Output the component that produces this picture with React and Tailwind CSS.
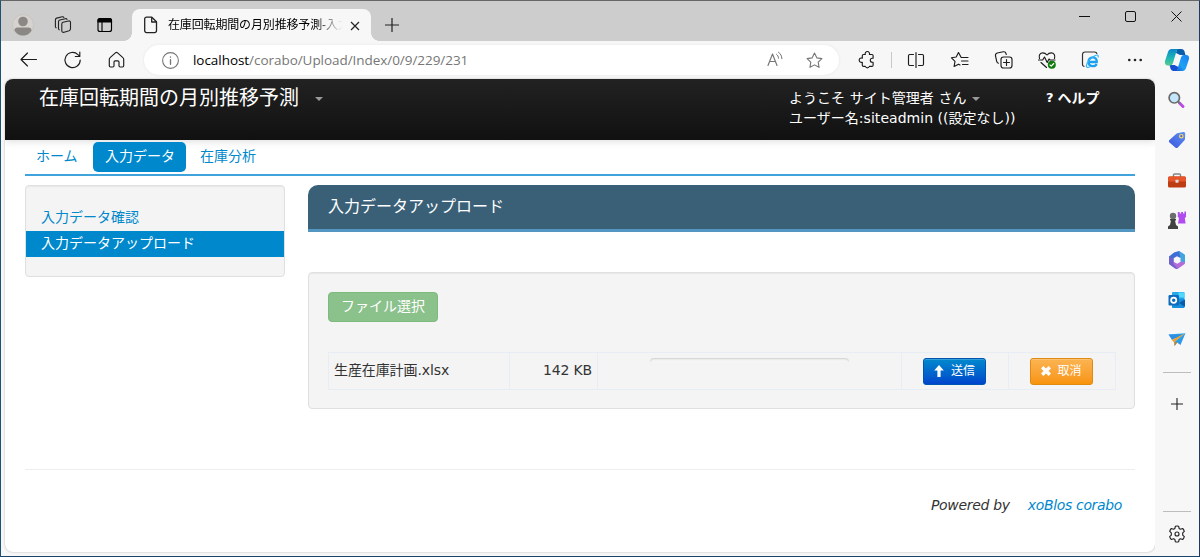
import React from 'react';

const Icon = ({ size = 20, children, className = '' }) => (
  <svg
    width={size}
    height={size}
    viewBox="0 0 20 20"
    fill="none"
    stroke="currentColor"
    strokeWidth="1.15"
    strokeLinecap="round"
    strokeLinejoin="round"
    className={`shrink-0 ${className}`}
  >
    {children}
  </svg>
);

const STAR = 'M10 2.2l2.4 5 5.4.8-3.9 3.8.9 5.4-4.8-2.6-4.8 2.6.9-5.4L2.200 8l5.400-.8z';

const Caret = ({ className = '' }) => (
  <span className={`inline-block h-0 w-0 border-x-4 border-t-4 border-x-transparent border-t-[#999] ${className}`} />
);

/* Title bar with the single open tab */
const TitleBar = () => (
  <div className="flex h-10 shrink-0 bg-[#cdcdcd] text-black">
    <div className="flex w-[131px] items-center pt-2 pl-[11px]">
      <svg width="22" height="22" viewBox="0 0 22 22">
        <circle cx="11" cy="11" r="10.500" fill="#d6d3ce" stroke="#c3c0bb" strokeWidth=".6" />
        <circle cx="11" cy="7.500" r="4.800" fill="#8b8784" />
        <path d="M2.500 16.500c0-2 1.200-3 3-3h11c1.800 0 3 1 3 3-1.500 3-4.800 5-8.500 5s-7-2-8.500-5z" fill="#8b8784" />
      </svg>
      <svg width="18" height="18" viewBox="0 0 18 18" fill="none" stroke="#222" strokeWidth="1.100" strokeLinecap="round" strokeLinejoin="round" className="ml-5">
        <path d="M9 6.300l5.500-1.300c1.200-.3 2 .3 2 1.500v6.300c0 1-.5 1.600-1.400 1.900l-5 1.500c-1.400.4-2.300-.2-2.300-1.500V8c0-.9.400-1.500 1.200-1.700z" />
        <path d="M5.200 13.800c-.5-.3-.7-.7-.7-1.300V5.800c0-1 .4-1.600 1.300-1.800l5.500-1.300c.8-.2 1.400 0 1.700.7" />
        <path d="M2.100 11.800c-.5-.3-.7-.7-.7-1.300V3.900c0-1 .4-1.600 1.300-1.800L8.200.8c.8-.2 1.400 0 1.700.7" />
      </svg>
      <Icon size={20} className="ml-[23px]">
        <rect x="3" y="3.500" width="13.500" height="13" rx="2" />
        <path d="M3 5.500a2 2 0 0 1 2-2h9.500a2 2 0 0 1 2 2V7H3z" fill="currentColor" />
        <path d="M7 7v9.500" />
      </Icon>
    </div>
    <div className="relative mt-2 flex w-[239px] items-center rounded-t-lg bg-[#f7f7f7] pl-[11px]">
      <svg width="16" height="18" viewBox="0 0 16 18" fill="none" stroke="#222" strokeWidth="1.300" strokeLinejoin="round">
        <path d="M3.500 1.200h5.300l4.700 4.600v9a1.800 1.800 0 0 1-1.800 1.800H3.500a1.800 1.800 0 0 1-1.800-1.800V3a1.800 1.800 0 0 1 1.800-1.800z" />
        <path d="M8.700 1.500V6h4.600" />
      </svg>
      <span className="ml-[9px] w-[174px] overflow-hidden bg-gradient-to-r from-black from-85% to-transparent bg-clip-text text-xs leading-5 tracking-[-0.15px] whitespace-nowrap text-transparent">
        在庫回転期間の月別推移予測-入力
      </span>
      <svg width="10" height="10" viewBox="0 0 10 10" stroke="#222" strokeWidth="1.200" className="mt-0.5 ml-2">
        <path d="M1 1l8 8M9 1l-8 8" />
      </svg>
      <span className="absolute bottom-0 -left-2 h-2 w-2 bg-[radial-gradient(circle_at_0_0,#cdcdcd_7.5px,#f7f7f7_8px)]" />
      <span className="absolute -right-2 bottom-0 h-2 w-2 bg-[radial-gradient(circle_at_100%_0,#cdcdcd_7.5px,#f7f7f7_8px)]" />
    </div>
    <svg width="14" height="14" viewBox="0 0 14 14" stroke="#222" strokeWidth="1.200" className="mt-[17px] ml-[14px]">
      <path d="M7 0v14M0 7h14" />
    </svg>
    <div className="ml-auto flex h-[30px] items-center gap-[35px] pr-[17px]">
      <svg width="11" height="11" viewBox="0 0 11 11" stroke="#111"><path d="M0 5.500h11" /></svg>
      <svg width="11" height="11" viewBox="0 0 11 11" fill="none" stroke="#111"><rect x=".5" y=".5" width="10" height="10" rx="1.500" /></svg>
      <svg width="11" height="11" viewBox="0 0 11 11" stroke="#111"><path d="M.5.5l10 10M10.500.5l-10 10" /></svg>
    </div>
  </div>
);

const AddressBar = () => (
  <div className="flex h-[30px] w-[695px] items-center rounded-full bg-white pl-[17px] text-[#767676] shadow-[0_0_3px_#e4e4e4]">
    <Icon size={19}>
      <circle cx="10" cy="10" r="8.300" />
      <path d="M10 9v5M10 6.300v.2" strokeWidth="1.400" />
    </Icon>
    <span className="ml-[13px] font-['Open_Sans',sans-serif] text-[13.5px] leading-5 tracking-[-0.05px] whitespace-nowrap">
      <span className="text-black">localhost</span>/corabo/Upload/Index/0/9/229/231
    </span>
    <div className="ml-auto flex items-center pr-[15px]">
      <Icon size={20}>
        <path d="M3 15.500L7.500 4l4.500 11.500M4.600 11.500h5.800" />
        <path d="M11.500 4.200c1.200 1 1.900 2.300 2 4M13.500 2.200c2.200 1.600 3.300 3.700 3.400 6.500" strokeWidth="1" />
      </Icon>
      <Icon size={19} className="ml-5"><path d={STAR} /></Icon>
    </div>
  </div>
);

const Copilot = () => (
  <svg width="26" height="24" viewBox="0 0 26 24">
    <defs>
      <linearGradient id="cpA" x1="0" y1="0" x2="0" y2="1">
        <stop offset="0" stopColor="#0b86c8" />
        <stop offset=".55" stopColor="#1cb6b5" />
        <stop offset="1" stopColor="#58cc8c" />
      </linearGradient>
      <linearGradient id="cpB" x1="1" y1="0" x2="0" y2="1">
        <stop offset="0" stopColor="#1c7df0" />
        <stop offset=".6" stopColor="#1aa3f5" />
        <stop offset="1" stopColor="#164fd1" />
      </linearGradient>
    </defs>
    <path d="M13 1h4.500c1.500 0 2.500 1 3 2.500L21.500 7H16l-4-2z" fill="#0a5ea8" />
    <path d="M13 23H9.500c-1.500 0-2.500-1-3-2.500l-1-3.500h5l4 2z" fill="#164fd1" />
    <path d="M7.500 1H15c-1.500.5-2.300 1.500-2.800 3L9 15c-.6 1.700-1.500 2.500-3 2.500H4C1.500 17.500.5 15.500 1 13L4 4c.6-2 1.800-3 3.500-3z" fill="url(#cpA)" />
    <path d="M18.500 23H11c1.500-.5 2.300-1.500 2.800-3L17 9.500c.6-1.700 1.500-2.500 3-2.500h2c2.500 0 3.500 2 3 4l-3 9c-.6 2-1.800 3-3.500 3z" fill="url(#cpB)" />
  </svg>
);

const ToolBar = () => (
  <div className="flex h-[38px] shrink-0 items-center bg-[#f7f7f7] text-[#1c1c1c]">
    <div className="flex w-[143px] items-center pl-[18px]">
      <Icon size={20}><path d="M17.500 9.500H2M8.500 3L2 9.500 8.500 16" /></Icon>
      <Icon size={20} className="ml-6">
        <path d="M17.200 10a7.600 7.600 0 1 1-2.300-5.400L16.600 6.200M16.800 2v4.500h-4.500" />
      </Icon>
      <Icon size={20} className="ml-6">
        <path d="M2.300 9.200c0-.7.3-1.200.8-1.600l5.300-4.700c.7-.6 1.500-.6 2.200 0l5.300 4.700c.5.4.8.900.8 1.600v6.600c0 .7-.5 1.200-1.200 1.200h-2.300c-.7 0-1.200-.5-1.200-1.200V12a1.200 1.200 0 0 0-1.200-1.200H8.200A1.200 1.200 0 0 0 7 12v3.800c0 .7-.5 1.200-1.200 1.200H3.500c-.7 0-1.200-.5-1.200-1.200z" />
      </Icon>
    </div>
    <AddressBar />
    <div className="flex items-center pl-[18px]">
      <Icon size={20}>
        <path d="M6.500 4.500h1.800a2.200 2.200 0 1 1 4.100 0h2.500c.7 0 1.200.5 1.200 1.200v2.500h-.8a2 2 0 0 0 0 4h.8v3c0 .7-.5 1.200-1.200 1.200h-2.500a2.200 2.200 0 0 1-4.100 0H6.500c-.7 0-1.200-.5-1.200-1.200v-3a2.200 2.200 0 1 1 0-4V5.700c0-.7.5-1.200 1.200-1.200z" />
      </Icon>
      <span className="ml-[14px] h-4 w-px bg-[#c8c8c8]" />
      <Icon size={20} className="ml-[14px]">
        <path d="M10 2.500v15M7.500 4.500H3.700c-.7 0-1.200.5-1.200 1.200v8.600c0 .7.5 1.200 1.200 1.200h3.800M12.500 4.500h3.800c.7 0 1.200.5 1.200 1.200v8.600c0 .7-.5 1.200-1.200 1.200h-3.800" />
      </Icon>
      <Icon size={20} className="ml-6">
        <path d="M12 7.500h-.8L8.500 2.500 6.200 7l-4.700.8L5 11.400l-.9 5.100 4.400-2.300 1.500.8M12.500 7.500h5.500M11.500 11h6.500M12.500 14.500h5.500" />
      </Icon>
      <Icon size={20} className="ml-6">
        <rect x="7" y="7" width="11" height="11" rx="2.500" />
        <path d="M12.500 9.500v6M9.500 12.500h6M4.500 13.200c-1-.2-1.600-.9-1.800-1.800L1.500 5.800c-.2-1.400.5-2.500 1.800-2.800l6-1.200c1.300-.2 2.400.5 2.700 1.700l.3 1" />
      </Icon>
      <Icon size={20} className="ml-[23px]">
        <path d="M2.500 8.500C1.500 5.500 3 2.800 5.800 2.800c1.700 0 3 .8 4.200 2.200 1.200-1.400 2.500-2.200 4.200-2.200 2.800 0 4.300 2.700 3.300 5.700M1.500 10h4.200l1.800-3 2.700 5.500L12 9l1 1h5M4 12.500l5.500 5" />
        <circle cx="14.800" cy="14.800" r="4" fill="#107c10" stroke="none" />
        <path d="M13 15l1.300 1.200 2.400-2.700" stroke="#fff" />
      </Icon>
      <svg width="20" height="20" viewBox="0 0 20 20" fill="none" className="ml-6">
        <path d="M3.500 16.500a2 2 0 0 1-2-2V4.500A2.500 2.500 0 0 1 4 2h9.500A2.500 2.500 0 0 1 16 4" stroke="#333" strokeWidth="1.200" />
        <path d="M7.500 12h8.300c.3-2.700-1.400-4.700-4-4.700s-4.300 1.900-4.300 4.500 1.800 4.400 4.400 4.400c1.800 0 3.100-.8 3.700-2.200" stroke="#1ba1f0" strokeWidth="2.300" />
        <path d="M17 7.500c.8-2.100-.3-3.200-2.700-2C11 7 5.500 12.500 5.300 15.700c0 2 1.800 2 3.700 1" stroke="#35b5f5" strokeWidth="1.200" />
      </svg>
      <svg width="16" height="4" viewBox="0 0 16 4" fill="#222" className="ml-[26px]">
        <circle cx="2.300" cy="2" r="1.300" /><circle cx="8" cy="2" r="1.300" /><circle cx="13.700" cy="2" r="1.300" />
      </svg>
      <span className="ml-[21px]"><Copilot /></span>
    </div>
  </div>
);

/* Edge side rail */
const SideRail = () => (
  <div className="flex w-11 shrink-0 flex-col items-center bg-[#f7f7f7] text-[#222]">
    <div className="flex flex-col gap-5 pt-[11px]">
      <svg width="20" height="20" viewBox="0 0 20 20">
        <path d="M12.500 13l3.500 3.500" stroke="#b94be8" strokeWidth="3" strokeLinecap="round" />
        <path d="M11 11.500l2 2" stroke="#777" strokeWidth="2" />
        <circle cx="7.300" cy="7.800" r="5.200" fill="#c3e6fb" stroke="#6a6a6a" strokeWidth="1.700" />
      </svg>
      <svg width="20" height="20" viewBox="0 0 20 20">
        <defs><linearGradient id="tag" x1="1" y1="0" x2="0" y2="1"><stop stopColor="#5d93f5" /><stop offset="1" stopColor="#3b55dd" /></linearGradient></defs>
        <path d="M10.500 3.300l5.500-1.300c1.500-.3 2.300.4 2.200 1.800L18 9c0 .6-.3 1.100-.7 1.500l-6.500 7c-.8.8-1.700.8-2.500 0l-5.800-5c-.8-.8-.8-1.700 0-2.500l6.600-6c.4-.4.8-.6 1.400-.7z" fill="url(#tag)" />
        <circle cx="14.300" cy="6.200" r="1.700" fill="#4a63c8" stroke="#ffd85a" strokeWidth="1.200" />
      </svg>
      <svg width="20" height="20" viewBox="0 0 20 20">
        <path d="M6.500 7V5c0-.6.400-1 1-1h5c.6 0 1 .4 1 1v2" fill="none" stroke="#858585" strokeWidth="1.400" />
        <rect x="1" y="6.500" width="18" height="11" rx="1.500" fill="#bd3c12" />
        <path d="M1 8C1 7.200 1.700 6.500 2.500 6.500h15c.8 0 1.500.7 1.500 1.500v3.500H1z" fill="#e5572a" />
        <rect x="8.500" y="9.800" width="3" height="3" rx=".5" fill="#ddd" />
      </svg>
      <svg width="20" height="20" viewBox="0 0 20 20">
        <path d="M10.800 2h1.900v1.600h1.400V2h1.900v1.600h1.400V1.500H19V7l-1.200 1 .8 5.500H11l1-5.500-1.200-1z" fill="#b14df0" />
        <circle cx="6" cy="6" r="3.200" fill="#6d6d6d" />
        <path d="M3 9h6v1.500H8l1 4.500 2 1.500V19H1v-2.500L3 15l1-4.500H3z" fill="#414141" />
      </svg>
      <svg width="20" height="20" viewBox="0 0 20 20">
        <path d="M7 2.500L12 1l6 4.500-5 2.300-3-1.500-3.500 2V12L2 14V6.500z" fill="#3e6fd6" />
        <path d="M12 1l5 3c.8.500 1 1 1 2v7.500l-4.500-2V8z" fill="#43a5df" />
        <path d="M18 12.500c0 1-.3 1.500-1 2L10.500 19l-8-4.500 4-2.800 3.800 2 3.700-2.200z" fill="#b46cd8" />
        <path d="M2 6.500v7.500l6 4.500c1 .5 1.500.5 2.500 0l-4-4.500V8.300z" fill="#7161ca" />
      </svg>
      <svg width="20" height="20" viewBox="0 0 20 20">
        <rect x="5" y="2" width="12.500" height="8" rx="1" fill="#28a8ea" />
        <rect x="11.500" y="2.500" width="6" height="5" fill="#50d9ff" />
        <path d="M5 8l12.500 1v8c0 .6-.4 1-1 1H6c-.6 0-1-.4-1-1z" fill="#1490df" />
        <path d="M18 9.500V17l-6-4z" fill="#0a5ca8" />
        <rect x="1.500" y="5" width="10.500" height="10.500" rx="1.200" fill="#0f6cbd" />
        <circle cx="6.700" cy="10.200" r="2.600" fill="none" stroke="#fff" strokeWidth="1.700" />
      </svg>
      <svg width="20" height="20" viewBox="0 0 20 20">
        <path d="M1.500 4.500L18.500 3l-8 6z" fill="#53c3f2" />
        <path d="M1.500 4.500L5 10l12-6z" fill="#2c8ee5" />
        <path d="M5 10l13.500-7L7 12.500z" fill="#f5a11d" />
        <path d="M7.500 16v-4l11-9-5 12-3.500-2.500z" fill="#2d9be9" />
        <path d="M7.500 12v4l2.800-3.500z" fill="#d97a10" />
      </svg>
    </div>
    <div className="mt-[22px] h-px w-7 bg-[#bdbdbd]" />
    <svg width="12" height="12" viewBox="0 0 12 12" stroke="#222" strokeWidth="1.100" className="mt-[25px]">
      <path d="M6 0v12M0 6h12" />
    </svg>
    <div className="mt-[101px] h-px w-7 bg-[#bdbdbd]" />
    <Icon size={20} className="mt-3">
      <path d="M8.400 2.200c1-.3 2.200-.3 3.200 0l.5 2.200 1.300.8 2.300-.7c.8.800 1.300 1.700 1.600 2.800l-1.600 1.600v2.200l1.600 1.600c-.3 1.100-.8 2-1.600 2.800l-2.300-.7-1.300.8-.5 2.200c-1 .3-2.200.3-3.200 0l-.5-2.200-1.300-.8-2.300.7c-.8-.8-1.300-1.700-1.600-2.800l1.600-1.600V8.900L2.700 7.300c.3-1.100.8-2 1.600-2.800l2.300.7 1.300-.8z" />
      <circle cx="10" cy="10" r="2" />
    </Icon>
  </div>
);

const SiteHeader = () => (
  <header className="flex h-[61px] shrink-0 bg-gradient-to-b from-[#222] to-[#111] text-white shadow-[0_1px_8px_rgba(0,0,0,0.15)]">
    <div className="flex h-[38px] w-[784px] items-center pl-[34px] text-xl">
      在庫回転期間の月別推移予測
      <Caret className="mt-0.5 ml-4" />
    </div>
    <div className="w-[256px] pt-[9px] text-sm leading-5 whitespace-nowrap">
      <div className="flex items-center">
        <span className="tracking-[0.04px]">ようこそ サイト管理者 さん</span>
        <Caret className="mt-0.5 ml-[6px]" />
      </div>
      <div className="tracking-[0.03px]">ユーザー名:siteadmin ((設定なし))</div>
    </div>
    <div className="flex h-9 items-center gap-1 pt-0.5 pl-px text-sm font-bold">
      <span className="text-[13px]">?</span>
      <span>ヘルプ</span>
    </div>
  </header>
);

const UploadTable = () => (
  <table className="mt-[30px] w-[787px] table-fixed border-collapse text-sm text-[#333]">
    <colgroup>
      <col className="w-[181px]" />
      <col className="w-[88px]" />
      <col className="w-[304px]" />
      <col className="w-[107px]" />
      <col className="w-[107px]" />
    </colgroup>
    <tbody>
      <tr className="h-[37px] [&>td]:border [&>td]:border-[#e6edf5] [&>td]:p-0">
        <td><div className="-mt-0.5 pl-[5px] tracking-[-0.1px]">生産在庫計画.xlsx</div></td>
        <td><div className="-mt-0.5 pr-[5px] text-right tracking-[-0.15px]">142 KB</div></td>
        <td className="align-top">
          <div className="mx-auto mt-[5px] h-[7px] w-[199px] rounded-t bg-[#f5f5f5] shadow-[inset_0_1px_2px_rgba(0,0,0,0.16)] [clip-path:inset(0_0_3px_0)]" />
        </td>
        <td>
          <button className="ml-[21px] flex h-[27px] w-[63px] items-center justify-center gap-[7px] rounded-[3px] border border-[#0055b3] bg-gradient-to-b from-[#0088cc] to-[#0044cc] text-xs text-white shadow-[inset_0_1px_0_rgba(255,255,255,0.2)]">
            <svg width="10" height="12" viewBox="0 0 10 12" fill="#fff"><path d="M5 0l4.800 5.500H6.600V12H3.400V5.500H.2z" /></svg>
            <span>送信</span>
          </button>
        </td>
        <td>
          <button className="ml-[21px] flex h-[27px] w-[63px] items-center justify-center gap-[6px] rounded-[3px] border border-[#df8a12] bg-gradient-to-b from-[#fbb450] to-[#f89406] text-xs text-white shadow-[inset_0_1px_0_rgba(255,255,255,0.2)]">
            <svg width="10" height="10" viewBox="0 0 10 10" stroke="#fff" strokeWidth="3.400"><path d="M1.200 1.200l7.600 7.600M8.800 1.200L1.200 8.800" /></svg>
            <span>取消</span>
          </button>
        </td>
      </tr>
    </tbody>
  </table>
);

const SitePage = () => (
  <div className="flex h-[473px] w-[1150px] shrink-0 flex-col overflow-hidden rounded-lg bg-white font-['DejaVu_Sans','Noto_Sans_CJK_JP',sans-serif] text-[#333] shadow-[0_0_2px_#aaa]">
    <SiteHeader />
    <div className="px-5">
      <nav className="flex h-9 items-start border-b-2 border-[#41a3db] pt-0.5 text-sm text-[#0088cc]">
        <a className="h-[30px] w-[68px] pl-[11px] leading-[29px]">ホーム</a>
        <a className="h-[30px] w-[93px] rounded-[5px] bg-[#0088cc] pl-3 leading-[29px] text-white">入力データ</a>
        <a className="h-[30px] pl-[14px] leading-[29px]">在庫分析</a>
      </nav>
      <div className="mt-[9px] flex items-start gap-[23px]">
        <aside className="h-[92px] w-[260px] rounded border border-[#e0e0e0] bg-[#f4f4f4] pt-[18px] text-sm leading-[26px] text-[#0088cc] shadow-[inset_0_1px_1px_rgba(0,0,0,0.05)]">
          <a className="block h-[27px] pl-[15px]">入力データ確認</a>
          <a className="block h-[26px] bg-[#0088cc] pl-[15px] leading-[25px] text-white">入力データアップロード</a>
        </aside>
        <main className="w-[827px]">
          <h1 className="h-[47px] rounded-t-[10px] border-b-[3px] border-[#5496c2] bg-[#3a6078] pl-5 text-base leading-[43px] text-white">
            入力データアップロード
          </h1>
          <section className="mt-10 h-[137px] rounded border border-[#e0e0e0] bg-[#f4f4f4] px-[19px] pt-[19px] shadow-[inset_0_1px_1px_rgba(0,0,0,0.05)]">
            <button className="block h-[30px] w-[110px] rounded border border-[#7dba7d] bg-[#8bc18b] pb-0.5 text-sm leading-[25px] text-white">
              ファイル選択
            </button>
            <UploadTable />
          </section>
        </main>
      </div>
      <footer className="mt-[60px] flex justify-end border-t border-[#eee] pt-[25px] pr-[13px] text-sm leading-5 italic">
        <span className="tracking-[-0.3px]">Powered by</span>
        <a className="ml-[18px] tracking-[-0.35px] text-[#0088cc]">xoBlos corabo</a>
      </footer>
    </div>
  </div>
);

const App = () => (
  <div className="flex h-[557px] w-[1200px] flex-col overflow-hidden border border-t-[#666] border-r-[#1f3864] border-b-[#1b4468] border-l-[#1b5276] bg-[#f7f7f7] font-['Liberation_Sans','Noto_Sans_CJK_JP',sans-serif]">
    <TitleBar />
    <ToolBar />
    <div className="flex min-h-0 flex-1 pl-1">
      <SitePage />
      <SideRail />
    </div>
  </div>
);

export default App;
